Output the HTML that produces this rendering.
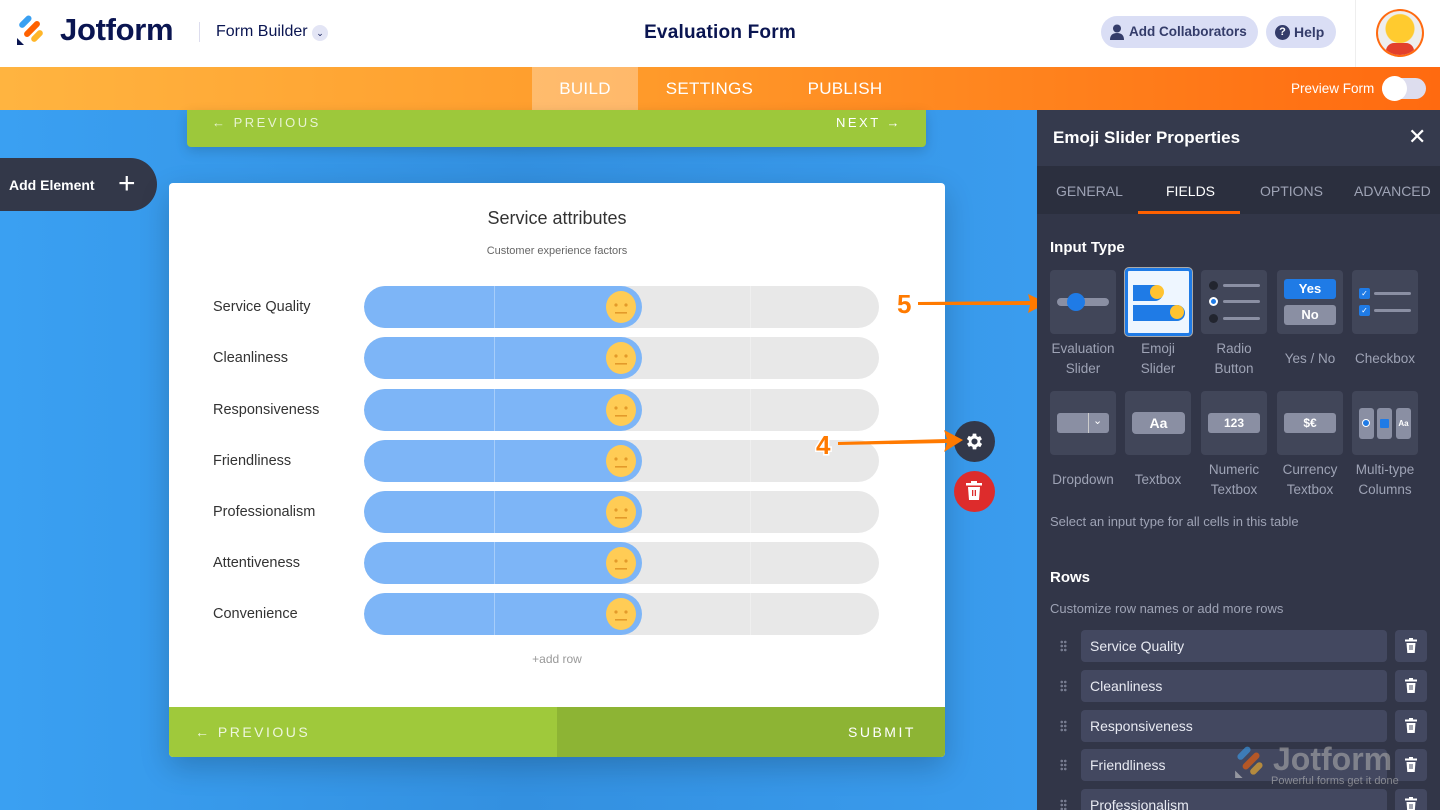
<!DOCTYPE html>
<html><head><meta charset="utf-8"><style>
*{box-sizing:border-box;margin:0;padding:0}
html{width:1440px;height:810px;overflow:hidden}
body{width:1440px;height:810px;overflow:hidden;font-family:"Liberation Sans",sans-serif;position:relative;background:#3a9cee}
.abs{position:absolute}
.hdr{left:0;top:0;width:1440px;height:67px;background:#fff}
.bar{left:0;top:67px;width:1440px;height:43px;background:linear-gradient(90deg,#ffb440,#ff9a2a 45%,#ff6a10)}
.tab{top:67px;height:43px;line-height:43px;color:#fff;font-size:17px;letter-spacing:.3px;text-align:center}
.canvas{left:0;top:110px;width:1037px;height:700px;background:linear-gradient(90deg,#3aa0f2,#3390e0 50%,#3a9cee)}
.panel{left:1037px;top:110px;width:403px;height:700px;background:#323648}
.tile{width:66px;height:64px;background:#414659;border-radius:4px}
.lbl{width:90px;text-align:center;color:#9ea3b5;font-size:13.5px;line-height:20px}
.row{left:364px;width:515px;height:42px;border-radius:21px;background:#e8e8e8;overflow:hidden}
.fill{left:0;top:0;width:278px;height:42px;background:#7db5f7;border-radius:21px}
.emo{width:36px;height:38px;border-radius:50%;background:#ffcc55;border:3px solid #7db5f7}
.rl{left:213px;font-size:14.5px;color:#333;width:150px}
.inp{left:1081px;width:306px;height:32px;background:#434860;border-radius:4px;color:#e8eaf2;font-size:14px;line-height:32px;padding-left:9px}
.tr{left:1395px;width:32px;height:32px;background:#434860;border-radius:4px}
.dots{left:1060px;width:7px;height:12px;background:radial-gradient(circle,#777c90 1.2px,transparent 1.4px) 0 0/3.5px 4px}
</style></head><body>
<div class="abs hdr"></div>
<svg class="abs" style="left:16px;top:13px" width="30" height="32" viewBox="0 0 30 32">
<rect x="2" y="6" width="15" height="6" rx="3" transform="rotate(-45 9 9)" fill="#3aa0f2"/>
<rect x="6" y="13" width="20" height="6" rx="3" transform="rotate(-45 16 16)" fill="#ff6100"/>
<rect x="14" y="20" width="14" height="6" rx="3" transform="rotate(-45 21 23)" fill="#ffb629"/>
<path d="M1 32 L1 25 L8 32Z" fill="#0a1551"/></svg>
<div class="abs" style="left:60px;top:12px;font-size:31px;font-weight:bold;color:#0a1551;letter-spacing:-.3px">Jotform</div>
<div class="abs" style="left:199px;top:22px;width:1px;height:20px;background:#dde"></div>
<div class="abs" style="left:216px;top:23px;font-size:16px;color:#0a1551">Form Builder</div>
<div class="abs" style="left:312px;top:25px;width:16px;height:16px;border-radius:50%;background:#e3e5f5;color:#0a1551;font-size:9px;text-align:center;line-height:16px">&#8964;</div>
<div class="abs" style="left:0;top:22px;width:1440px;text-align:center;font-size:19px;color:#0a1551;font-weight:bold;letter-spacing:.2px">Evaluation Form</div>
<div class="abs" style="left:1101px;top:16px;width:157px;height:32px;border-radius:16px;background:#dadef5;color:#343c6a;font-size:13.5px;line-height:32px;padding-left:28px;font-weight:bold">Add Collaborators</div>
<svg class="abs" style="left:1110px;top:24px" width="14" height="16"><circle cx="7" cy="4.5" r="4" fill="#343c6a"/><path d="M0 16 Q0 9 7 9 Q14 9 14 16Z" fill="#343c6a"/></svg>
<div class="abs" style="left:1266px;top:16px;width:70px;height:32px;border-radius:16px;background:#dadef5;color:#343c6a;font-size:14px;line-height:32px;padding-left:28px;font-weight:bold">Help</div>
<div class="abs" style="left:1275px;top:25px;width:15px;height:15px;border-radius:50%;background:#343c6a;color:#fff;font-size:11px;text-align:center;line-height:15px;font-weight:bold">?</div>
<div class="abs" style="left:1355px;top:0;width:1px;height:67px;background:#eee"></div>
<div class="abs" style="left:1376px;top:9px;width:48px;height:48px;border-radius:50%;background:#ff6a10;padding:2px"><div style="width:44px;height:44px;border-radius:50%;background:radial-gradient(circle at 50% 40%,#ffcb2f 14px,#eee 15px);overflow:hidden;position:relative"><div style="position:absolute;left:8px;top:32px;width:28px;height:14px;background:#e2402b;border-radius:8px 8px 0 0"></div></div></div>

<div class="abs bar"></div>
<div class="abs tab" style="left:532px;width:106px;background:rgba(255,255,255,.3)">BUILD</div>
<div class="abs tab" style="left:652px;width:115px">SETTINGS</div>
<div class="abs tab" style="left:795px;width:100px">PUBLISH</div>
<div class="abs" style="left:1291px;top:81px;color:#fff;font-size:13.5px">Preview Form</div>
<div class="abs" style="left:1382px;top:78px;width:44px;height:21px;border-radius:11px;background:#dde"></div>
<div class="abs" style="left:1382px;top:76px;width:25px;height:25px;border-radius:50%;background:#fff"></div>

<div class="abs canvas"></div>
<div class="abs" style="left:187px;top:110px;width:739px;height:37px;background:#9dc83b;border-radius:0 0 4px 4px;box-shadow:0 4px 12px rgba(0,0,0,.15)"></div>
<div class="abs" style="left:212px;top:115px;color:#e8f3d2;font-size:13px;letter-spacing:2.5px">&#8592; PREVIOUS</div>
<div class="abs" style="left:836px;top:115px;color:#fff;font-size:13px;letter-spacing:2.5px">NEXT &#8594;</div>
<div class="abs" style="left:0;top:158px;width:157px;height:53px;background:#333849;border-radius:0 27px 27px 0"></div>
<div class="abs" style="left:9px;top:177px;color:#fff;font-size:14px;font-weight:bold">Add Element</div>
<div class="abs" style="left:118px;top:167px;color:#fff;font-size:30px;line-height:34px">+</div>

<div class="abs" style="left:169px;top:183px;width:776px;height:574px;background:#fff;border-radius:4px;box-shadow:0 10px 30px rgba(0,0,0,.2);overflow:hidden">
<div class="abs" style="left:0;top:524px;width:388px;height:50px;background:#9fc93b"></div>
<div class="abs" style="left:388px;top:524px;width:388px;height:50px;background:#8db434"></div>
<div class="abs" style="left:26px;top:541px;color:#eef6dd;font-size:14px;letter-spacing:2.5px">&#8592; PREVIOUS</div>
<div class="abs" style="left:679px;top:541px;color:#fff;font-size:14px;letter-spacing:2.5px">SUBMIT</div>
</div>
<div class="abs" style="left:169px;top:208px;width:776px;text-align:center;font-size:18px;color:#333">Service attributes</div>
<div class="abs" style="left:169px;top:245px;width:776px;text-align:center;font-size:11px;color:#666">Customer experience factors</div>
<div class="abs" style="left:169px;top:652px;width:776px;text-align:center;font-size:12px;color:#999">+add row</div>

<div class="abs rl" style="top:299px">Service Quality</div>
<div class="abs rl" style="top:350px">Cleanliness</div>
<div class="abs rl" style="top:402px">Responsiveness</div>
<div class="abs rl" style="top:453px">Friendliness</div>
<div class="abs rl" style="top:504px">Professionalism</div>
<div class="abs rl" style="top:555px">Attentiveness</div>
<div class="abs rl" style="top:606px">Convenience</div>
<div id="rows"></div>
<script>
var ys=[286,337,389,440,491,542,593],h='';
ys.forEach(function(y){h+='<div class="abs row" style="top:'+y+'px"><div class="abs fill"></div><div class="abs" style="left:130px;top:0;width:1px;height:42px;background:#a6cdfa"></div><div class="abs" style="left:386px;top:0;width:1px;height:42px;background:#efefef"></div></div><div class="abs emo" style="left:603px;top:'+(y+2)+'px"><svg width="30" height="32"><circle cx="10" cy="14" r="1.6" fill="#e39a2a"/><circle cx="20" cy="14" r="1.6" fill="#e39a2a"/><rect x="9" y="21" width="12" height="1.6" fill="#e39a2a"/></svg></div>'});
document.getElementById('rows').innerHTML=h;
</script>

<div class="abs" style="left:954px;top:421px;width:41px;height:41px;border-radius:50%;background:#333849"></div>
<svg class="abs" style="left:964px;top:431px" width="21" height="21" viewBox="0 0 24 24"><path fill="#fff" d="M19.4 13a7.5 7.5 0 0 0 0-2l2.1-1.6-2-3.5-2.5 1a7 7 0 0 0-1.7-1L15 3h-4l-.4 2.6a7 7 0 0 0-1.7 1l-2.5-1-2 3.5L6.6 11a7.5 7.5 0 0 0 0 2l-2.1 1.6 2 3.5 2.5-1a7 7 0 0 0 1.7 1L11 21h4l.4-2.6a7 7 0 0 0 1.7-1l2.5 1 2-3.5zM13 15.5a3.5 3.5 0 1 1 0-7 3.5 3.5 0 0 1 0 7z" transform="translate(-1 0)"/></svg>
<div class="abs" style="left:954px;top:471px;width:41px;height:41px;border-radius:50%;background:#dd2c2c"></div>
<svg class="abs" style="left:966px;top:481px" width="16" height="20"><rect x="0" y="2" width="16" height="2.5" fill="#fff"/><rect x="5" y="0" width="6" height="3" fill="#fff"/><path d="M2 6h12l-1 13H3z" fill="#fff"/><rect x="6" y="9" width="1.3" height="6" fill="#dd2c2c"/><rect x="8.7" y="9" width="1.3" height="6" fill="#dd2c2c"/></svg>

<svg class="abs" style="left:815px;top:280px" width="235" height="180">
<path d="M103 22 L215 21 L213 14 L232 23 L213 33 L215 25 L103 25Z" fill="#ff7a00"/>
<path d="M23 162 L132 159 L129 150 L148 160 L129 172 L132 163 L23 165Z" fill="#ff7a00"/>
<text x="82" y="33" font-family="Liberation Sans" font-weight="bold" font-size="26" fill="#ff7a00" stroke="#fff" stroke-width="3" paint-order="stroke">5</text>
<text x="1" y="174" font-family="Liberation Sans" font-weight="bold" font-size="26" fill="#ff7a00" stroke="#fff" stroke-width="3" paint-order="stroke">4</text>
</svg>

<div class="abs panel"></div>
<div class="abs" style="left:1037px;top:110px;width:403px;height:56px;background:#353a4d"></div>
<div class="abs" style="left:1053px;top:128px;color:#fff;font-size:17px;font-weight:bold">Emoji Slider Properties</div>
<div class="abs" style="left:1408px;top:124px;color:#fff;font-size:22px">&#10005;</div>
<div class="abs" style="left:1037px;top:166px;width:403px;height:48px;background:#2b2f3e"></div>
<div class="abs" style="left:1056px;top:183px;color:#9ea3b5;font-size:14px">GENERAL</div>
<div class="abs" style="left:1166px;top:183px;color:#fff;font-size:14px">FIELDS</div>
<div class="abs" style="left:1138px;top:211px;width:102px;height:3px;background:#ff6100"></div>
<div class="abs" style="left:1260px;top:183px;color:#9ea3b5;font-size:14px">OPTIONS</div>
<div class="abs" style="left:1354px;top:183px;color:#9ea3b5;font-size:14px">ADVANCED</div>
<div class="abs" style="left:1050px;top:239px;color:#fff;font-size:15px;font-weight:bold">Input Type</div>

<div class="abs tile" style="left:1050px;top:270px"></div>
<div class="abs" style="left:1057px;top:298px;width:52px;height:8px;border-radius:4px;background:#8a8fa3"></div>
<div class="abs" style="left:1067px;top:293px;width:18px;height:18px;border-radius:50%;background:#1f7be6"></div>
<div class="abs tile" style="left:1125px;top:268px;width:67px;height:68px;background:#eef6ff;border:3px solid #1f7be6;box-shadow:0 0 0 1px #aaa"></div>
<div class="abs" style="left:1133px;top:285px;width:30px;height:16px;background:#1f7be6;border-radius:0 8px 8px 0"></div>
<div class="abs" style="left:1150px;top:285px;width:14px;height:14px;border-radius:50%;background:#ffc330"></div>
<div class="abs" style="left:1133px;top:305px;width:52px;height:16px;background:#1f7be6;border-radius:0 8px 8px 0"></div>
<div class="abs" style="left:1170px;top:305px;width:14px;height:14px;border-radius:50%;background:#ffc330"></div>
<div class="abs tile" style="left:1201px;top:270px"></div>
<div class="abs" style="left:1209px;top:281px;width:9px;height:9px;border-radius:50%;background:#22252f"></div><div class="abs" style="left:1223px;top:284px;width:37px;height:3px;background:#8a8fa3;border-radius:2px"></div>
<div class="abs" style="left:1209px;top:297px;width:9px;height:9px;border-radius:50%;background:#1f7be6;border:2.5px solid #fff"></div><div class="abs" style="left:1223px;top:300px;width:37px;height:3px;background:#8a8fa3;border-radius:2px"></div>
<div class="abs" style="left:1209px;top:314px;width:9px;height:9px;border-radius:50%;background:#22252f"></div><div class="abs" style="left:1223px;top:317px;width:37px;height:3px;background:#8a8fa3;border-radius:2px"></div>
<div class="abs tile" style="left:1277px;top:270px"></div>
<div class="abs" style="left:1284px;top:279px;width:52px;height:20px;background:#1f7be6;border-radius:3px;color:#fff;font-size:13px;text-align:center;line-height:20px;font-weight:bold">Yes</div>
<div class="abs" style="left:1284px;top:305px;width:52px;height:20px;background:#8a8fa3;border-radius:3px;color:#fff;font-size:13px;text-align:center;line-height:20px;font-weight:bold">No</div>
<div class="abs tile" style="left:1352px;top:270px"></div>
<div class="abs" style="left:1359px;top:288px;width:11px;height:11px;background:#1f7be6;border-radius:2px;color:#fff;font-size:8px;text-align:center;line-height:11px">&#10003;</div><div class="abs" style="left:1374px;top:292px;width:37px;height:3px;background:#8a8fa3;border-radius:2px"></div>
<div class="abs" style="left:1359px;top:305px;width:11px;height:11px;background:#1f7be6;border-radius:2px;color:#fff;font-size:8px;text-align:center;line-height:11px">&#10003;</div><div class="abs" style="left:1374px;top:309px;width:37px;height:3px;background:#8a8fa3;border-radius:2px"></div>

<div class="abs lbl" style="left:1038px;top:339px">Evaluation<br>Slider</div>
<div class="abs lbl" style="left:1113px;top:339px">Emoji<br>Slider</div>
<div class="abs lbl" style="left:1189px;top:339px">Radio<br>Button</div>
<div class="abs lbl" style="left:1265px;top:349px">Yes / No</div>
<div class="abs lbl" style="left:1340px;top:349px">Checkbox</div>

<div class="abs tile" style="left:1050px;top:391px"></div>
<div class="abs" style="left:1057px;top:413px;width:52px;height:20px;background:#8a8fa3;border-radius:3px"></div>
<div class="abs" style="left:1088px;top:413px;width:1px;height:20px;background:#ccc"></div>
<div class="abs" style="left:1093px;top:414px;color:#fff;font-size:11px">&#8964;</div>
<div class="abs tile" style="left:1125px;top:391px"></div>
<div class="abs" style="left:1132px;top:412px;width:53px;height:22px;background:#8a8fa3;border-radius:4px;color:#fff;font-size:14px;text-align:center;line-height:22px;font-weight:bold">Aa</div>
<div class="abs tile" style="left:1201px;top:391px"></div>
<div class="abs" style="left:1208px;top:413px;width:52px;height:20px;background:#8a8fa3;border-radius:3px;color:#fff;font-size:12px;text-align:center;line-height:20px;font-weight:bold">123</div>
<div class="abs tile" style="left:1277px;top:391px"></div>
<div class="abs" style="left:1284px;top:413px;width:52px;height:20px;background:#8a8fa3;border-radius:3px;color:#fff;font-size:12px;text-align:center;line-height:20px;font-weight:bold">$€</div>
<div class="abs tile" style="left:1352px;top:391px"></div>
<div class="abs" style="left:1359px;top:408px;width:15px;height:31px;background:#8a8fa3;border-radius:3px"></div>
<div class="abs" style="left:1377px;top:408px;width:15px;height:31px;background:#8a8fa3;border-radius:3px"></div>
<div class="abs" style="left:1396px;top:408px;width:15px;height:31px;background:#8a8fa3;border-radius:3px;color:#fff;font-size:8px;text-align:center;line-height:31px;font-weight:bold">Aa</div>
<div class="abs" style="left:1362px;top:419px;width:8px;height:8px;border-radius:50%;background:#1f7be6;border:1.5px solid #fff"></div>
<div class="abs" style="left:1380px;top:419px;width:9px;height:9px;background:#1f7be6;border-radius:1px"></div>

<div class="abs lbl" style="left:1038px;top:470px">Dropdown</div>
<div class="abs lbl" style="left:1113px;top:470px">Textbox</div>
<div class="abs lbl" style="left:1189px;top:460px">Numeric<br>Textbox</div>
<div class="abs lbl" style="left:1265px;top:460px">Currency<br>Textbox</div>
<div class="abs lbl" style="left:1340px;top:460px">Multi-type<br>Columns</div>

<div class="abs" style="left:1050px;top:514px;color:#9ea3b5;font-size:13px">Select an input type for all cells in this table</div>
<div class="abs" style="left:1050px;top:569px;color:#fff;font-size:15px;font-weight:bold">Rows</div>
<div class="abs" style="left:1050px;top:601px;color:#9ea3b5;font-size:13px">Customize row names or add more rows</div>

<div id="plist"></div>
<script>
var n=['Service Quality','Cleanliness','Responsiveness','Friendliness','Professionalism'],t=[630,670,710,749,789],p='';
n.forEach(function(s,i){p+='<div class="abs dots" style="top:'+(t[i]+10)+'px"></div><div class="abs inp" style="top:'+t[i]+'px">'+s+'</div><div class="abs tr" style="top:'+t[i]+'px"><svg style="position:absolute;left:10px;top:8px" width="12" height="15"><rect x="0" y="1.5" width="12" height="2" fill="#fff"/><rect x="4" y="0" width="4" height="2" fill="#fff"/><path d="M1.5 5h9l-.8 10H2.3z" fill="#fff"/><rect x="4.5" y="7" width="1" height="5" fill="#434860"/><rect x="6.5" y="7" width="1" height="5" fill="#434860"/></svg></div>'});
document.getElementById('plist').innerHTML=p;
</script>
<div class="abs" style="left:1233px;top:744px;opacity:.6">
<svg width="34" height="34" viewBox="0 0 30 32" style="position:absolute;left:0;top:0">
<rect x="2" y="6" width="15" height="6" rx="3" transform="rotate(-45 9 9)" fill="#3aa0f2"/>
<rect x="6" y="13" width="20" height="6" rx="3" transform="rotate(-45 16 16)" fill="#ff6100"/>
<rect x="14" y="20" width="14" height="6" rx="3" transform="rotate(-45 21 23)" fill="#ffb629"/>
<path d="M1 32 L1 25 L8 32Z" fill="#ccc"/></svg>
<div style="position:absolute;left:40px;top:-3px;font-size:32px;font-weight:bold;color:#aaa;white-space:nowrap">Jotform</div>
<div style="position:absolute;left:38px;top:31px;font-size:11px;color:#bbb;white-space:nowrap">Powerful forms get it done</div>
</div>
</body></html>
